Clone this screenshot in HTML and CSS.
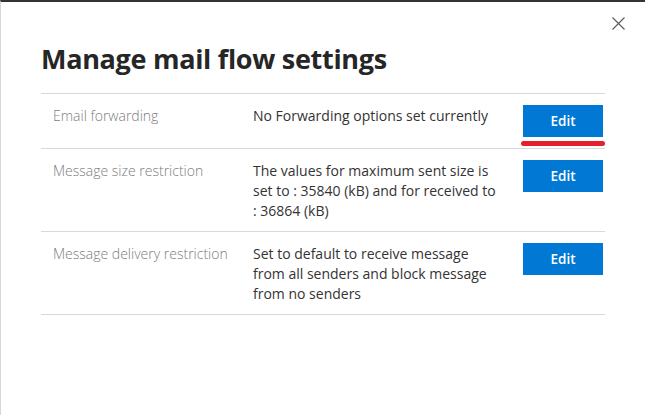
FILE: index.html
```html
<!DOCTYPE html>
<html>
<head>
<meta charset="utf-8">
<link rel="stylesheet" href="styles.css">
</head>
<body>
<div class="panel">
  <button class="close" aria-label="Close">
    <svg width="13" height="13" viewBox="0 0 13 13"><path d="M0.5 0.5 L12.5 12.5 M12.5 0.5 L0.5 12.5" stroke="#5a5a5a" stroke-width="1.1" fill="none"/></svg>
  </button>
  <h1 class="title">Manage mail flow settings</h1>
  <div class="list">
    <div class="row">
      <div class="label">Email forwarding</div>
      <div class="value">No Forwarding options set currently</div>
      <div class="action">
        <button class="edit">Edit</button>
        <span class="mark"></span>
      </div>
    </div>
    <div class="row">
      <div class="label">Message size restriction</div>
      <div class="value">The values for maximum sent size is set to : 35840 (kB) and for received to : 36864 (kB)</div>
      <div class="action"><button class="edit">Edit</button></div>
    </div>
    <div class="row">
      <div class="label">Message delivery restriction</div>
      <div class="value">Set to default to receive message from all senders and block message from no senders</div>
      <div class="action"><button class="edit">Edit</button></div>
    </div>
  </div>
</div>
</body>
</html>
```
FILE: styles.css
```css
html, body {
  margin: 0;
  padding: 0;
  background: #ffffff;
}
body {
  font-family: "Open Sans", "Noto Sans", sans-serif;
  width: 645px;
  height: 415px;
  overflow: hidden;
}
.panel {
  position: relative;
  height: 413px;
  border-top: 2px solid #333333;
  border-left: 1px solid #d6d6d6;
  padding: 0 40px 0 40px;
}
.close {
  position: absolute;
  top: 15px;
  right: 20px;
  border: 0;
  background: none;
  padding: 0;
  width: 13px;
  height: 13px;
  display: flex;
}
.title {
  margin: 0;
  padding: 38px 0 0 0;
  height: 53px;
  font-size: 27px;
  font-weight: 700;
  color: #262626;
  line-height: 38px;
  letter-spacing: -0.3px;
}
.list {
  border-top: 1px solid #d9d9d9;
}
.row {
  display: grid;
  grid-template-columns: 200px 270px 80px;
  padding: 11px 0 10px 12px;
  border-bottom: 1px solid #d9d9d9;
  font-size: 14px;
  line-height: 20px;
}
.label {
  color: #7d7d7d;
  font-weight: 300;
  padding-top: 1px;
}
.value {
  color: #333333;
  padding-top: 1px;
  padding-right: 25px;
}
.action {
  position: relative;
  min-height: 33px;
}
.edit {
  display: block;
  width: 80px;
  height: 32px;
  border: 0;
  background: #0078d4;
  color: #ffffff;
  font-family: "Open Sans", sans-serif;
  font-size: 13.5px;
  font-weight: 600;
  padding: 0;
}
.mark {
  position: absolute;
  left: -2px;
  top: 36px;
  width: 84px;
  height: 5px;
  border-radius: 3px;
  background: #e3202b;
}
```
